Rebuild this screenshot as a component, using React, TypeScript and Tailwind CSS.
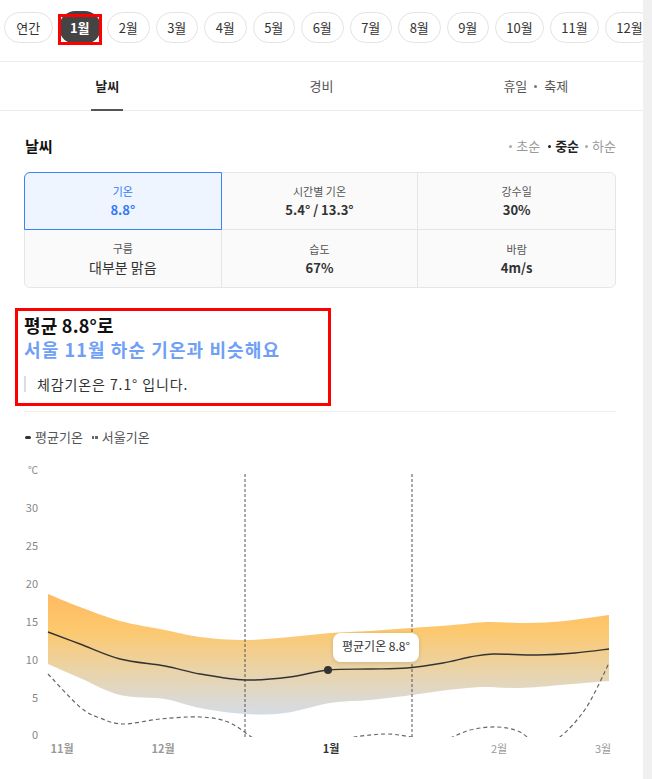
import React from "react";

type P = [number, number];

function smooth(pts: P[], move = true): string {
  let d = `${move ? "M" : "L"}${pts[0][0]},${pts[0][1]}`;
  for (let i = 0; i < pts.length - 1; i++) {
    const p0 = pts[i - 1] || pts[i];
    const p1 = pts[i];
    const p2 = pts[i + 1];
    const p3 = pts[i + 2] || p2;
    const c1x = p1[0] + (p2[0] - p0[0]) / 6;
    const c1y = p1[1] + (p2[1] - p0[1]) / 6;
    const c2x = p2[0] - (p3[0] - p1[0]) / 6;
    const c2y = p2[1] - (p3[1] - p1[1]) / 6;
    d += ` C${c1x.toFixed(1)},${c1y.toFixed(1)} ${c2x.toFixed(1)},${c2y.toFixed(1)} ${p2[0]},${p2[1]}`;
  }
  return d;
}

const upper: P[] = [
  [48, 593], [80, 606], [120, 620], [165, 629], [200, 636], [245, 639], [290, 636],
  [330, 632], [370, 630], [410, 627], [453, 624], [487, 621], [520, 622], [553, 621], [580, 618], [609, 614],
];
const lower: P[] = [
  [48, 663], [80, 677], [120, 694], [165, 698], [200, 707], [245, 713], [285, 712],
  [330, 702], [370, 699], [405, 695], [440, 690], [480, 686], [520, 687], [560, 684], [609, 680],
];
const mean: P[] = [
  [48, 631], [80, 643], [120, 658], [165, 665], [200, 673], [245, 679], [290, 676],
  [328, 669], [370, 668], [407, 667], [443, 662], [470, 656], [493, 653], [537, 654], [575, 652], [609, 648],
];
const seoul: P[] = [
  [48, 673], [80, 706], [100, 717], [123, 723], [160, 718], [200, 716], [228, 721],
  [250, 735], [275, 752], [315, 748], [350, 737], [385, 733], [412, 736], [440, 740],
  [470, 729], [497, 726], [520, 731], [540, 745], [560, 736], [586, 707], [609, 662],
];

const bandPath =
  smooth(upper) + " " + smooth([...lower].reverse(), false) + " Z";

const months = ["2월", "3월", "4월", "5월", "6월", "7월", "8월", "9월"];
const months2 = ["10월", "11월", "12월"];

const font = { fontFamily: '"Noto Sans CJK KR", "Noto Sans", sans-serif' };

function Cell({
  label,
  value,
  big,
  active,
  className,
}: {
  label: string;
  value: string;
  big?: boolean;
  active?: boolean;
  className?: string;
}) {
  return (
    <div
      className={
        "relative flex h-[57px] flex-col items-center justify-center gap-[4px] " +
        (active ? "rounded-tl-[5px] bg-[#eef5ff] " : "") +
        (className || "")
      }
    >
      {active && (
        <span className="absolute -left-px -top-px bottom-[-1px] right-[-1px] rounded-tl-[6px] border border-[#3b82f6]" />
      )}
      <div
        className={
          "text-[11px] leading-[14px] " + (active ? "text-[#3478f6]" : "text-[#555]")
        }
      >
        {label}
      </div>
      <div
        className={
          big
            ? "text-[14px] leading-[17px] text-[#333]"
            : "text-[13px] font-semibold leading-[16px] " +
              (active ? "text-[#3478f6]" : "text-[#333]")
        }
      >
        {value}
      </div>
    </div>
  );
}

export default function App() {
  return (
    <div className="flex h-[779px] w-[652px] overflow-hidden bg-white" style={font}>
      <div className="flex w-[643px] flex-col overflow-hidden">
        {/* month pills */}
        <div className="mt-[11px] flex h-[33px] shrink-0 items-center gap-[6px] pl-[4px]">
          <div className="flex h-[31px] w-[48.5px] shrink-0 items-center justify-center rounded-full border border-[#e3e3e3] text-[13px] text-[#333]">
            연간
          </div>
          <div className="relative shrink-0">
            <div className="flex h-[33px] w-[42.5px] items-center justify-center rounded-full bg-[#444] text-[13px] font-bold text-white">
              1월
            </div>
            <span className="absolute -left-px -right-px top-[3px] bottom-[-1px] border-[3px] border-[#ff0000]" />
          </div>
          {months.map((m) => (
            <div
              key={m}
              className="flex h-[31px] w-[42.5px] shrink-0 items-center justify-center rounded-full border border-[#e3e3e3] text-[13px] text-[#333]"
            >
              {m}
            </div>
          ))}
          {months2.map((m) => (
            <div
              key={m}
              className="flex h-[31px] w-[49px] shrink-0 items-center justify-center rounded-full border border-[#e3e3e3] text-[13px] text-[#333]"
            >
              {m}
            </div>
          ))}
        </div>

        <div className="mt-[17px] h-px shrink-0 bg-[#ececec]" />

        {/* tabs */}
        <div className="grid h-[49px] shrink-0 grid-cols-3 border-b border-[#ececec]">
          <div className="relative flex items-center justify-center text-[13px] font-bold text-[#222]">
            날씨
            <span className="absolute bottom-[-1px] left-1/2 h-[2px] w-[32px] -translate-x-1/2 bg-[#555]" />
          </div>
          <div className="flex items-center justify-center text-[13px] text-[#555]">경비</div>
          <div className="flex items-center justify-center gap-[7px] text-[13px] text-[#555]">
            <span>휴일</span>
            <span className="h-[3px] w-[3px] rounded-full bg-[#777]" />
            <span>축제</span>
          </div>
        </div>

        <div className="flex shrink-0 flex-col pl-[24px] pr-[27px]">
          {/* heading */}
          <div className="mt-[23px] flex h-[24px] items-center justify-between">
            <div className="pl-px text-[15px] font-bold text-[#111]">날씨</div>
            <div className="flex items-center gap-[4px] text-[13px]">
              <span className="h-[3px] w-[3px] rounded-full bg-[#aaa]" />
              <span className="text-[#999]">초순</span>
              <span className="ml-[4px] h-[3px] w-[3px] rounded-full bg-[#222]" />
              <span className="font-bold text-[#222]">중순</span>
              <span className="ml-[2px] h-[3px] w-[3px] rounded-full bg-[#aaa]" />
              <span className="text-[#999]">하순</span>
            </div>
          </div>

          {/* grid */}
          <div className="mt-[14px] grid grid-cols-3 rounded-[6px] border border-[#e6e6e6] bg-[#fafafa]">
            <Cell label="기온" value="8.8°" active className="border-b border-r border-[#e6e6e6]" />
            <Cell label="시간별 기온" value="5.4° / 13.3°" className="border-b border-r border-[#e6e6e6]" />
            <Cell label="강수일" value="30%" className="border-b border-[#e6e6e6]" />
            <Cell label="구름" value="대부분 맑음" big className="border-r border-[#e6e6e6]" />
            <Cell label="습도" value="67%" className="border-r border-[#e6e6e6]" />
            <Cell label="바람" value="4m/s" />
          </div>

          {/* summary */}
          <div className="relative mt-[25px]">
            <div className="text-[18px] font-bold leading-[24px] tracking-[0.2px] text-[#111]">평균 8.8°로</div>
            <div className="text-[18px] font-bold leading-[24px] tracking-[1.1px] text-[#6fa0f5]">
              서울 11월 하순 기온과 비슷해요
            </div>
            <div className="mt-[15px] border-l-2 border-[#dddddd] pl-[11px] text-[14px] leading-[16px] tracking-[0.9px] text-[#333]">
              체감기온은 7.1° 입니다.
            </div>
            <span className="absolute left-[-9px] top-[-5px] h-[98px] w-[316px] border-[3px] border-[#ff0000]" />
          </div>

          <div className="mt-[19px] h-px bg-[#eeeeee]" />

          {/* legend */}
          <div className="mt-[17px] flex h-[16px] items-center pl-px text-[13px] text-[#555]">
            <span className="mr-[4px] h-[3px] w-[6px] rounded-full bg-[#333]" />
            <span>평균기온</span>
            <span className="ml-[9px] mr-[4px] flex gap-[1px]">
              <span className="h-[3px] w-[2.5px] bg-[#666]" />
              <span className="h-[3px] w-[2.5px] bg-[#666]" />
            </span>
            <span>서울기온</span>
          </div>
        </div>

        {/* chart */}
        <svg
          className="mt-[11px] shrink-0"
          width={643}
          height={324}
          viewBox="0 455 643 324"
        >
          <defs>
            <linearGradient id="band" gradientUnits="userSpaceOnUse" x1="0" y1="592" x2="0" y2="714">
              <stop offset="0" stopColor="#ffb963" />
              <stop offset="0.3" stopColor="#fdc86d" />
              <stop offset="0.65" stopColor="#e9d4ab" />
              <stop offset="1" stopColor="#d4dce6" />
            </linearGradient>
            <clipPath id="clip0">
              <rect x="0" y="455" width="643" height="281" />
            </clipPath>
            <filter id="sh" x="-20%" y="-40%" width="140%" height="180%">
              <feDropShadow dx="0" dy="1" stdDeviation="2" floodColor="#000" floodOpacity="0.15" />
            </filter>
          </defs>

          {/* y labels */}
          <g fontSize="11" fill="#888" textAnchor="end" dominantBaseline="middle" style={font}>
            <text x="38" y="470" fontSize="10">℃</text>
            <text x="38" y="508">30</text>
            <text x="38" y="546">25</text>
            <text x="38" y="584">20</text>
            <text x="38" y="622">15</text>
            <text x="38" y="660">10</text>
            <text x="38" y="698">5</text>
            <text x="38" y="735">0</text>
          </g>

          <path d={bandPath} fill="url(#band)" />

          <line x1="245" y1="473" x2="245" y2="736" stroke="#555" strokeWidth="1" strokeDasharray="3 2" />
          <line x1="412" y1="473" x2="412" y2="736" stroke="#555" strokeWidth="1" strokeDasharray="3 2" />

          <path d={smooth(mean)} fill="none" stroke="#333" strokeWidth="1.4" />
          <g clipPath="url(#clip0)">
            <path d={smooth(seoul)} fill="none" stroke="#666" strokeWidth="1.2" strokeDasharray="4 3" />
          </g>
          <circle cx="328" cy="669" r="4" fill="#333" />

          <rect x="333" y="632" width="86" height="29" rx="8" fill="#fff" filter="url(#sh)" />
          <text x="376" y="647" fontSize="12" fill="#333" textAnchor="middle" dominantBaseline="middle" style={font}>
            평균기온 8.8°
          </text>

          {/* x labels */}
          <g fontSize="11" textAnchor="middle" dominantBaseline="middle" style={font}>
            <text x="62" y="749" fill="#999" fontWeight="600">11월</text>
            <text x="163" y="749" fill="#999" fontWeight="600">12월</text>
            <text x="331" y="749" fill="#333" fontWeight="700">1월</text>
            <text x="499" y="749" fill="#999">2월</text>
            <text x="603" y="749" fill="#999">3월</text>
          </g>
        </svg>
      </div>
      <div className="w-[9px] shrink-0 bg-[#f0f0f0]" />
    </div>
  );
}
